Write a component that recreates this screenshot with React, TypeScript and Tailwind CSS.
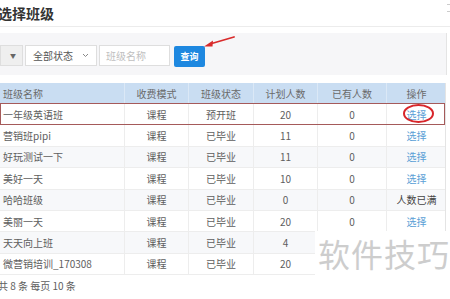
import React from 'react';

const rows = [
  { name: '一年级英语班', mode: '课程', status: '预开班', plan: '20', has: '0', op: '选择' },
  { name: '营销班pipi', mode: '课程', status: '已毕业', plan: '11', has: '0', op: '选择' },
  { name: '好玩测试一下', mode: '课程', status: '已毕业', plan: '11', has: '0', op: '选择' },
  { name: '美好一天', mode: '课程', status: '已毕业', plan: '10', has: '0', op: '选择' },
  { name: '哈哈班级', mode: '课程', status: '已毕业', plan: '0', has: '0', op: '人数已满' },
  { name: '美丽一天', mode: '课程', status: '已毕业', plan: '20', has: '0', op: '选择' },
  { name: '天天向上班', mode: '课程', status: '已毕业', plan: '4', has: '', op: '' },
  { name: '微营销培训_170308', mode: '课程', status: '已毕业', plan: '20', has: '', op: '' },
];

const headers = ['班级名称', '收费模式', '班级状态', '计划人数', '已有人数', '操作'];

const cols = 'grid grid-cols-[125px_64px_65px_64px_69px_59px]';

const App: React.FC = () => {
  return (
    <div
      className="relative w-[450px] h-[299px] overflow-hidden bg-white text-[#5e5e5e]"
      style={{ fontFamily: '"Noto Sans CJK SC", "Noto Sans", sans-serif' }}
    >
      {/* Title */}
      <div className="h-[27px] border-b border-[#ececec] flex items-center">
        <span className="-ml-[2px] text-[14px] font-bold text-[#333] leading-none">选择班级</span>
      </div>

      {/* Filter bar */}
      <div className="mt-[6px] h-[42px] w-[447px] bg-[#f6f6f8] border-r border-[#e4e4e4] flex items-center gap-[2px] pt-[2px]">
        <div className="w-[23px] h-[21px] bg-[#efefef] border border-[#dedede] flex items-center justify-end pr-[6px] text-[6px] text-[#666]">
          ▼
        </div>
        <div className="w-[72px] h-[21px] bg-white border border-[#dedede] flex items-center justify-between px-[7px] text-[10px] text-[#555]">
          <span>全部状态</span>
          <svg width="7" height="5" viewBox="0 0 7 5" fill="none">
            <path d="M1 1l2.5 2.5L6 1" stroke="#888" strokeWidth="1" />
          </svg>
        </div>
        <div className="w-[71px] h-[21px] bg-white border border-[#dedede] flex items-center px-[6px] text-[10px] text-[#c0c0c0]">
          班级名称
        </div>
        <div className="ml-[2px] mt-[3px] w-[31px] h-[21px] bg-[#1e88e0] rounded-[2px] flex items-center justify-center text-[9px] font-bold text-white">
          查询
        </div>
      </div>

      {/* Red arrow */}
      <svg className="absolute left-[200px] top-[34px]" width="36" height="16" viewBox="0 0 36 16">
        <path d="M34 3 L10 10" stroke="#d92b2b" strokeWidth="1.8" strokeLinecap="round" />
        <path d="M4 12.5 L13 6.5 L12.5 12.5 Z" fill="#d92b2b" />
      </svg>

      {/* Table */}
      <div className="mt-[8px] w-[446px] border-r border-[#e4e4e4]">
        <div className={`${cols} h-[21px] bg-[#c9ddf2] text-[10px] text-[#6a6a6a]`}>
          {headers.map((h, i) => (
            <div
              key={h}
              className={`flex items-center border-r border-[#dbe8f6] last:border-r-0 ${i === 0 ? 'pl-[3px]' : 'justify-center'}`}
            >
              {h}
            </div>
          ))}
        </div>
        {rows.map((r, idx) => (
          <div
            key={r.name}
            className={`relative ${cols} h-[21.4px] text-[10px] border-b border-[#ededed] ${idx % 2 === 0 && idx > 0 ? 'bg-[#f7f8fa]' : 'bg-white'}`}
          >
            <div className="flex items-center pl-[3px] border-r border-[#ededed] whitespace-nowrap">{r.name}</div>
            <div className="flex items-center justify-center border-r border-[#ededed]">{r.mode}</div>
            <div className="flex items-center justify-center border-r border-[#ededed]">{r.status}</div>
            <div className="flex items-center justify-center border-r border-[#ededed]">{r.plan}</div>
            <div className="flex items-center justify-center border-r border-[#ededed]">{r.has}</div>
            <div className={`flex items-center justify-center ${r.op === '选择' ? 'text-[#5aa0d6]' : 'text-[#444]'}`}>
              {r.op}
            </div>
            {idx === 0 && (
              <div className="absolute inset-x-0 -top-px -bottom-px border border-[#a55a5a] pointer-events-none" />
            )}
          </div>
        ))}
      </div>

      {/* Footer */}
      <div className="mt-[3px] -ml-[2px] text-[10px] text-[#5e5e5e]">共 8 条 每页 10 条</div>

      {/* Red circle around first 选择 */}
      <div className="absolute left-[403px] top-[104px] w-[31px] h-[19px] rounded-[50%] border-[2.5px] border-[#d8262b]" />

      {/* Watermark */}
      <div className="absolute left-[315px] top-[231px] right-0 bottom-0 bg-white">
        <div className="mt-[6px] ml-[3px] text-[32px] leading-none text-[#cdcdcd] tracking-[1px] whitespace-nowrap">
          软件技巧
        </div>
      </div>

      {/* Scroll marker */}
      <div className="absolute right-0 top-[4px] w-[3px] h-[8px] border-y border-[#ccc]" />
    </div>
  );
};

export default App;
